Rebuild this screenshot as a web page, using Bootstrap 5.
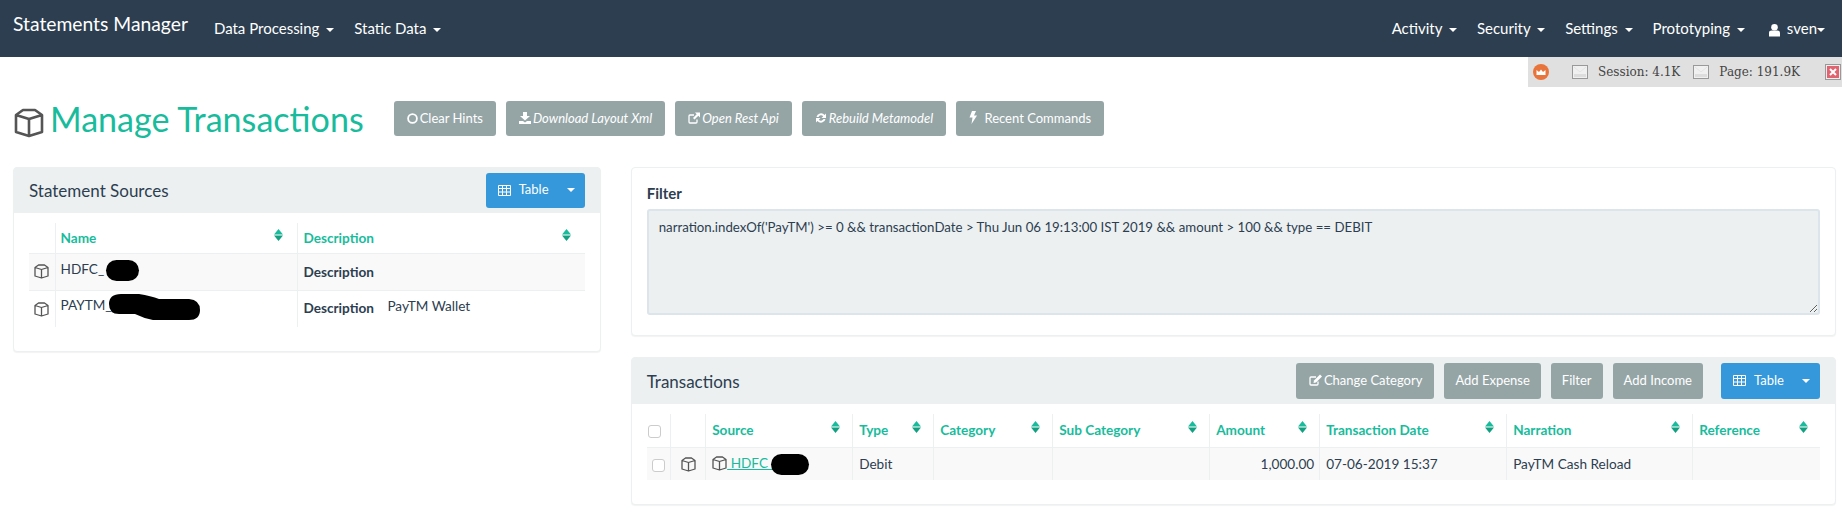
<!DOCTYPE html>
<html lang="en">
<head>
  <meta charset="UTF-8">
  <title>Manage Transactions</title>
  <link href="https://cdn.jsdelivr.net/npm/bootstrap@5.3.0/dist/css/bootstrap.min.css" rel="stylesheet">
  <style>
    body {
      font-family: Lato, "Liberation Sans", sans-serif;
      font-size: 13px;
      color: #2c3e50;
      background: #fff;
      overflow-x: hidden;
    }
    .top-bar {
      height: 57px;
      background: #2c3e50;
      padding: 0 17px 0 13px;
    }
    .top-bar .navbar-brand {
      font-size: 19.3px;
      color: #fff;
      margin: 0 26px 9px 0;
      padding: 0;
    }
    .top-bar .nav-link {
      font-size: 15px;
      color: #fff;
      padding: 0;
    }
    .top-left { gap: 20px; }
    .top-right { gap: 20px; }
    .user-link { margin-left: 4px; }
    .user-link svg { margin-right: 7px; }
    .caret-down {
      display: inline-block;
      margin-left: 3px;
      vertical-align: 2px;
      border-top: 4px solid #fff;
      border-left: 4px solid transparent;
      border-right: 4px solid transparent;
    }
    .profiler-bar {
      position: absolute;
      top: 57px;
      right: 0;
      width: 314px;
      height: 30px;
      background: #e0e0e0;
      font-family: "DejaVu Serif", serif;
      font-size: 12px;
      color: #444;
      padding-left: 5px;
    }
    .bar-logo { margin-right: 23px; }
    .bar-page { margin-right: 10px; }
    .bar-page.second { margin-left: 13px; }
    .bar-close { margin-left: auto; margin-right: 1px; }
    .page-wrap { padding: 0 6px 0 13px; overflow-x: hidden; }
    .title-row { padding-top: 44px; height: 110px; gap: 10px; }
    .page-title {
      font-size: 34.1px;
      font-weight: 400;
      color: #18bc9c;
      margin: 0 20px 0 0;
      line-height: 35px;
      white-space: nowrap;
    }
    .page-title svg { color: #555; margin: 0 6px 0 1px; vertical-align: -6px; }
    .grey-btn {
      background: #95a5a6;
      border: 0;
      color: #fff;
      font-size: 13px;
      height: 35px;
      padding: 0 13px;
      border-radius: 3px;
      white-space: nowrap;
    }
    .grey-btn em { font-style: italic; }
    .grey-btn svg { vertical-align: -1px; margin-right: 2px; }
    .table-btn {
      background: #3498db;
      border: 0;
      color: #fff;
      font-size: 13px;
      width: 99px;
      height: 35px;
      border-radius: 3px;
      padding: 0 10px 0 12px;
    }
    .cols-row { --bs-gutter-x: 30px; }
    .panel-box {
      border: 1px solid #ecf0f1;
      border-radius: 4px;
      box-shadow: 0 1px 1px rgba(0,0,0,.05);
      margin-bottom: 21px;
      background: #fff;
    }
    .panel-head {
      background: #ecf0f1;
      height: 46px;
      margin-top: -1px;
      padding: 0 15px;
      font-size: 17px;
      border-radius: 4px 4px 0 0;
    }
    .head-title { margin-top: 2px; }
    .panel-head.tall { height: 47px; }
    .panel-head.tall .grey-btn { height: 36px; padding: 0 11px; }
    .panel-head.tall .grey-btn.change-btn { padding: 0 12px 0 13px; }
    .panel-head.tall .table-btn { height: 36px; }
    .head-gap { gap: 10px; }
    .source-box { height: 185px; }
    .filter-box { height: 169px; padding: 15px 15px 0 15px; }
    .filter-title { font-size: 15px; font-weight: 700; line-height: 20px; margin-bottom: 6px; }
    .filter-area {
      width: 100%;
      height: 106px;
      background: #ecf0f1;
      border: 2px solid #dce4ec;
      border-radius: 3px;
      padding: 7px 10px;
      color: #2c3e50;
      font-size: 13.25px;
      box-shadow: none;
    }
    .filter-area:focus { background: #ecf0f1; border-color: #dce4ec; box-shadow: none; }
    .tx-box { height: 148px; }
    .tbl-wrap { padding: 10px 15px 0 15px; }
    .data-table {
      table-layout: fixed;
      width: 100%;
      margin: 0;
      font-size: 13.6px;
      color: #2c3e50;
    }
    .data-table th, .data-table td {
      border: 0;
      border-left: 1px solid #ecf0f1;
      padding: 0 5px 0 6px;
      vertical-align: middle;
      background: transparent;
      box-shadow: none;
      color: #2c3e50;
      white-space: nowrap;
    }
    .data-table th:first-child, .data-table td:first-child { border-left: 0; padding: 0; text-align: center; }
    .data-table th { color: #18bc9c; font-weight: 700; position: relative; }
    .data-table tbody tr { border-top: 1px solid #ecf0f1; }
    .data-table tbody tr:nth-child(odd) td { background: #f9f9f9; }
    .src-table thead tr { height: 30px; }
    .src-table tbody tr { height: 37px; }
    .src-table col:nth-child(1) { width: 26px; }
    .src-table col:nth-child(2) { width: 242px; }
    .src-table th:nth-child(2) { padding-left: 5px; }
    .src-table .name-cell { padding: 0 5px 3px 5px; }
    .src-table .sort-ico { right: 14px; top: 6px; }
    .tx-table thead tr { height: 33px; }
    .tx-table tbody tr { height: 33px; }
    .tx-table col:nth-child(1) { width: 24px; }
    .tx-table col:nth-child(2) { width: 35px; }
    .tx-table col:nth-child(3) { width: 147px; }
    .tx-table col:nth-child(4) { width: 81px; }
    .tx-table col:nth-child(5) { width: 119px; }
    .tx-table col:nth-child(6) { width: 157px; }
    .tx-table col:nth-child(7) { width: 110px; }
    .tx-table col:nth-child(8) { width: 187px; }
    .tx-table col:nth-child(9) { width: 186px; }
    .tx-table th:first-child { text-align: left; padding-left: 1px; }
    .sort-ico {
      position: absolute;
      top: 7px;
      right: 12px;
      width: 9px;
      height: 12px;
    }
    .box-ico { color: #555; vertical-align: -3px; }
    .tx-link { color: #18bc9c; }
    .blot { display: inline-block; background: #000; border-radius: 11px; vertical-align: middle; }
    .blot-a { width: 33px; height: 21px; margin-left: 2px; }
    .blot-b { vertical-align: middle; margin-left: -3px; }
    .blot-c { width: 38px; height: 21px; margin-left: -3px; }
    .row-check {
      display: inline-block;
      width: 13px;
      height: 13px;
      border: 1px solid #ccc;
      border-radius: 3px;
      background: #fff;
      vertical-align: middle;
    }
    .desc-label { font-weight: 700; margin-right: 10px; vertical-align: -2px; }
  </style>
</head>
<body>
  <svg width="0" height="0" class="position-absolute">
    <symbol id="cube" viewBox="0 0 30 30">
      <path d="M9 2 H21 L28 7 V24 L15 28 L2 24 V7 Z M2 7 L15 11 L28 7 M15 11 V28" fill="none" stroke="currentColor" stroke-width="2.6" stroke-linejoin="round"/>
    </symbol>
    <symbol id="sort" viewBox="0 0 9 12">
      <path d="M4.5 0 L9 5.4 H0 Z" fill="#18bc9c"/>
      <path d="M0 6.6 H9 L4.5 12 Z" fill="#12a080"/>
    </symbol>
    <symbol id="grid" viewBox="0 0 13 11">
      <path d="M.5 .5 H12.5 V10.5 H.5 Z M.5 3.5 H12.5 M.5 7 H12.5 M4.5 .5 V10.5 M8.5 .5 V10.5" fill="none" stroke="#fff"/>
    </symbol>
    <symbol id="page" viewBox="0 0 16 14">
      <rect x=".5" y=".5" width="15" height="13" fill="#f0f0f0" stroke="#999"/>
      <path d="M2 9 H14 V12 H2 Z" fill="#ddd"/>
      <path d="M2 2 L8 7 L14 2" fill="none" stroke="#e4e4e4"/>
    </symbol>
  </svg>

  <nav class="top-bar d-flex align-items-center justify-content-between">
    <div class="d-flex align-items-center">
      <a class="navbar-brand" href="#">Statements Manager</a>
      <div class="d-flex top-left">
        <a class="nav-link" href="#">Data Processing <span class="caret-down"></span></a>
        <a class="nav-link" href="#">Static Data <span class="caret-down"></span></a>
      </div>
    </div>
    <div class="d-flex top-right">
      <a class="nav-link" href="#">Activity <span class="caret-down"></span></a>
      <a class="nav-link" href="#">Security <span class="caret-down"></span></a>
      <a class="nav-link" href="#">Settings <span class="caret-down"></span></a>
      <a class="nav-link" href="#">Prototyping <span class="caret-down"></span></a>
      <a class="nav-link user-link" href="#"><svg width="11" height="14" viewBox="0 0 12 14"><circle cx="6" cy="4" r="3.6" fill="#fff"/><path d="M0 14 V10 Q0 7.5 3 7.5 H9 Q12 7.5 12 10 V14 Z" fill="#fff"/></svg>sven<span class="caret-down ms-0"></span></a>
    </div>
  </nav>

  <div class="profiler-bar d-flex align-items-center">
    <svg class="bar-logo" width="16" height="16" viewBox="0 0 16 16"><circle cx="8" cy="8" r="8" fill="#e8743b"/><path d="M3.5 6 L6 8 L8 5.5 L10 8 L12.5 6 V11 H3.5 Z" fill="#fff"/></svg>
    <svg class="bar-page" width="16" height="14"><use href="#page"/></svg>
    <span>Session: 4.1K</span>
    <svg class="bar-page second" width="16" height="14"><use href="#page"/></svg>
    <span>Page: 191.9K</span>
    <svg class="bar-close" width="16" height="16" viewBox="0 0 16 16"><rect x=".5" y=".5" width="15" height="15" fill="#eee" stroke="#999"/><rect x="2" y="2" width="12" height="12" fill="#e06470"/><path d="M5 5 L11 11 M11 5 L5 11" stroke="#fff" stroke-width="2"/></svg>
  </div>

  <div class="page-wrap">
    <div class="title-row d-flex align-items-start">
      <h1 class="page-title"><svg width="30" height="30"><use href="#cube"/></svg>Manage Transactions</h1>
      <button class="grey-btn"><svg width="11" height="11" viewBox="0 0 11 11"><circle cx="5.5" cy="5.5" r="4.4" fill="none" stroke="#fff" stroke-width="1.8"/></svg>Clear Hints</button>
      <button class="grey-btn"><svg width="12" height="12" viewBox="0 0 12 12"><path d="M4 0 H8 V4 H11 L6 8.5 L1 4 H4 Z M0 9 H4 L6 10.5 L8 9 H12 V12 H0 Z" fill="#fff"/></svg><em>Download Layout Xml</em></button>
      <button class="grey-btn"><svg width="12" height="12" viewBox="0 0 12 12"><path d="M9 7.5 V10 Q9 11 8 11 H2 Q1 11 1 10 V4 Q1 3 2 3 H6" fill="none" stroke="#fff" stroke-width="1.3"/><path d="M7 .5 H12 V5.5 L10.3 3.8 L6.5 7.5 L5 6 L8.7 2.2 Z" fill="#fff"/></svg><em>Open Rest Api</em></button>
      <button class="grey-btn"><svg width="12" height="12" viewBox="0 0 12 12"><path d="M1.5 5 A4.6 4.6 0 0 1 9.6 3 L11 1.5 V6 H6.5 L8.2 4.3 A2.8 2.8 0 0 0 3.5 5 Z M10.5 7 A4.6 4.6 0 0 1 2.4 9 L1 10.5 V6 H5.5 L3.8 7.7 A2.8 2.8 0 0 0 8.5 7 Z" fill="#fff"/></svg><em>Rebuild Metamodel</em></button>
      <button class="grey-btn"><svg width="8" height="13" viewBox="0 0 8 13" class="me-1"><path d="M3 0 H7 L5 4.5 H8 L2.5 13 L3.5 6.5 H0.5 Z" fill="#fff"/></svg> Recent Commands</button>
    </div>

    <div class="row cols-row">
      <div class="col-4">
        <div class="panel-box source-box">
          <div class="panel-head d-flex align-items-center justify-content-between">
            <span class="head-title">Statement Sources</span>
            <button class="table-btn d-flex align-items-center">
              <svg width="13" height="11"><use href="#grid"/></svg>
              <span class="ms-2">Table</span>
              <span class="caret-down ms-auto"></span>
            </button>
          </div>
          <div class="tbl-wrap">
            <table class="table data-table src-table">
              <colgroup><col><col><col></colgroup>
              <thead>
                <tr>
                  <th></th>
                  <th>Name<svg class="sort-ico"><use href="#sort"/></svg></th>
                  <th>Description<svg class="sort-ico"><use href="#sort"/></svg></th>
                </tr>
              </thead>
              <tbody>
                <tr>
                  <td><svg class="box-ico" width="15" height="15"><use href="#cube"/></svg></td>
                  <td class="name-cell">HDFC_<span class="blot blot-a"></span></td>
                  <td><span class="desc-label">Description</span></td>
                </tr>
                <tr>
                  <td><svg class="box-ico" width="15" height="15"><use href="#cube"/></svg></td>
                  <td class="name-cell">PAYTM_<svg class="blot-b" width="91" height="26" viewBox="0 0 91 26"><path d="M0 10 Q0 0 12 0 H30 Q42 2 50 5 H80 Q91 6 91 16 Q91 26 80 26 H44 Q34 24 26 20 H10 Q0 20 0 10 Z" fill="#000"/></svg></td>
                  <td class="pb-1"><span class="desc-label">Description</span> PayTM Wallet</td>
                </tr>
              </tbody>
            </table>
          </div>
        </div>
      </div>

      <div class="col-8">
        <div class="panel-box filter-box">
          <div class="filter-title">Filter</div>
          <textarea class="form-control filter-area" readonly>narration.indexOf('PayTM') &gt;= 0 &amp;&amp; transactionDate &gt; Thu Jun 06 19:13:00 IST 2019 &amp;&amp; amount &gt; 100 &amp;&amp; type == DEBIT</textarea>
        </div>

        <div class="panel-box tx-box">
          <div class="panel-head tall d-flex align-items-center justify-content-between">
            <span class="head-title">Transactions</span>
            <div class="d-flex align-items-center head-gap">
              <button class="grey-btn change-btn"><svg width="13" height="12" viewBox="0 0 13 12"><path d="M9 7.5 V10 Q9 11 8 11 H2 Q1 11 1 10 V4 Q1 3 2 3 H7" fill="none" stroke="#fff" stroke-width="1.3"/><path d="M11 .5 L13 2.5 L7 8.5 L4.5 9 L5 6.5 Z" fill="#fff"/></svg>Change Category</button>
              <button class="grey-btn">Add Expense</button>
              <button class="grey-btn">Filter</button>
              <button class="grey-btn">Add Income</button>
              <button class="table-btn d-flex align-items-center ms-2">
                <svg width="13" height="11"><use href="#grid"/></svg>
                <span class="ms-2">Table</span>
                <span class="caret-down ms-auto"></span>
              </button>
            </div>
          </div>
          <div class="tbl-wrap">
            <table class="table data-table tx-table">
              <colgroup><col><col><col><col><col><col><col><col><col><col></colgroup>
              <thead>
                <tr>
                  <th><span class="row-check"></span></th>
                  <th></th>
                  <th>Source<svg class="sort-ico"><use href="#sort"/></svg></th>
                  <th>Type<svg class="sort-ico"><use href="#sort"/></svg></th>
                  <th>Category<svg class="sort-ico"><use href="#sort"/></svg></th>
                  <th>Sub Category<svg class="sort-ico"><use href="#sort"/></svg></th>
                  <th>Amount<svg class="sort-ico"><use href="#sort"/></svg></th>
                  <th>Transaction Date<svg class="sort-ico"><use href="#sort"/></svg></th>
                  <th>Narration<svg class="sort-ico"><use href="#sort"/></svg></th>
                  <th>Reference<svg class="sort-ico"><use href="#sort"/></svg></th>
                </tr>
              </thead>
              <tbody>
                <tr>
                  <td><span class="row-check"></span></td>
                  <td class="text-center"><svg class="box-ico" width="15" height="15"><use href="#cube"/></svg></td>
                  <td><svg class="box-ico" width="15" height="15"><use href="#cube"/></svg><a class="tx-link" href="#"> HDFC_</a><span class="blot blot-c"></span></td>
                  <td>Debit</td>
                  <td></td>
                  <td></td>
                  <td class="text-end">1,000.00</td>
                  <td>07-06-2019 15:37</td>
                  <td>PayTM Cash Reload</td>
                  <td></td>
                </tr>
              </tbody>
            </table>
          </div>
        </div>
      </div>
    </div>
  </div>
  <script src="https://cdn.jsdelivr.net/npm/bootstrap@5.3.0/dist/js/bootstrap.bundle.min.js"></script>
</body>
</html>
